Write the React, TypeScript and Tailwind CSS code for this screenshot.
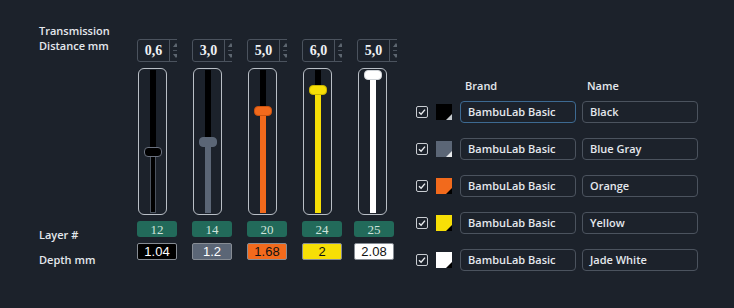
import React from "react";

type Filament = {
  spin: string;
  layer: number;
  depth: string;
  color: string;
  thumbBorder: string;
  depthText: string;
  thumbTop: number;
  name: string;
  corner: string;
};

const filaments: Filament[] = [
  { spin: "0,6", layer: 12, depth: "1.04", color: "#000000", thumbBorder: "#6b7280", depthText: "#ffffff", thumbTop: 79, name: "Black", corner: "#c4c8cc" },
  { spin: "3,0", layer: 14, depth: "1.2", color: "#5b6676", thumbBorder: "#5b6676", depthText: "#ffffff", thumbTop: 69, name: "Blue Gray", corner: "#e8eaec" },
  { spin: "5,0", layer: 20, depth: "1.68", color: "#f26a1c", thumbBorder: "#c9520f", depthText: "#111111", thumbTop: 38, name: "Orange", corner: "#000000" },
  { spin: "6,0", layer: 24, depth: "2", color: "#f7df06", thumbBorder: "#c9b400", depthText: "#111111", thumbTop: 17, name: "Yellow", corner: "#000000" },
  { spin: "5,0", layer: 25, depth: "2.08", color: "#ffffff", thumbBorder: "#d0d4d8", depthText: "#111111", thumbTop: 2, name: "Jade White", corner: "#000000" },
];

const SpinBox: React.FC<{ value: string }> = ({ value }) => (
  <div className="w-[40px] h-[23px] overflow-hidden">
    <div className="w-[46px] h-full flex border border-[#4b535e] rounded-[3px]">
      <div className="w-[31px] flex items-center justify-center text-[14px] font-bold text-[#eef1f4] [font-family:'Liberation_Serif',serif]">
        {value}
      </div>
      <div className="flex-1 border-l border-[#4b535e] flex flex-col items-center justify-center gap-[3px]">
        <svg width="6" height="4" viewBox="0 0 6 4">
          <path d="M0 4 L3 0 L6 4 Z" fill="#5d6670" />
        </svg>
        <div className="w-[6px] h-px bg-[#4b535e]" />
        <svg width="6" height="4" viewBox="0 0 6 4">
          <path d="M0 0 L3 4 L6 0 Z" fill="#5d6670" />
        </svg>
      </div>
    </div>
  </div>
);

const Slider: React.FC<{ f: Filament }> = ({ f }) => {
  const center = f.thumbTop + 5;
  return (
    <div className="ml-px w-[29px] h-[147px] border border-[#b9bfc6] rounded-[6px] relative">
      <div className="absolute left-[10.5px] top-[1px] bottom-[1px] w-[6px] bg-black" />
      <div
        className="absolute left-[10.5px] bottom-[1px] w-[6px]"
        style={{
          top: center,
          background: f.color,
          boxShadow: f.color === "#000000" ? "inset 0 0 0 1px #4b535e" : undefined,
        }}
      />
      <div
        className="absolute left-[4.5px] w-[18px] h-[10px] rounded-[4px] border"
        style={{ top: f.thumbTop - 1, background: f.color, borderColor: f.thumbBorder }}
      />
    </div>
  );
};

const Checkbox: React.FC = () => (
  <div className="w-[12px] h-[12px] rounded-[2px] border border-[#c9cdd2] flex items-center justify-center">
    <svg width="8" height="8" viewBox="0 0 8 8">
      <path d="M1 4.2 L3.1 6.3 L7 1.6" fill="none" stroke="#e8ebee" strokeWidth="1.4" />
    </svg>
  </div>
);

const Swatch: React.FC<{ color: string; corner: string }> = ({ color, corner }) => (
  <div className="w-[16px] h-[16px] relative" style={{ background: color }}>
    <svg className="absolute right-0 bottom-0" width="6" height="6" viewBox="0 0 6 6">
      <path d="M6 0 L6 6 L0 6 Z" fill={corner} />
    </svg>
  </div>
);

const App: React.FC = () => {
  return (
    <div className="w-[734px] h-[308px] bg-[#1c222b] flex text-[#e4e8ed] [font-family:'Open_Sans',sans-serif]">
      <div className="w-[137px] pl-[39px] pt-[23px] text-[11px] font-semibold leading-[15px]">
        <div>Transmission</div>
        <div>Distance mm</div>
        <div className="mt-[174px]">Layer #</div>
        <div className="mt-[10px]">Depth mm</div>
      </div>

      <div className="flex gap-[15px] pt-[39px]">
        {filaments.map((f, i) => (
          <div key={i} className="w-[40px] flex flex-col">
            <SpinBox value={f.spin} />
            <div className="mt-[6px]">
              <Slider f={f} />
            </div>
            <div
              className={
                "mt-[6px] w-[40px] h-[16px] rounded-[3px] bg-[#226a5a] flex items-center justify-center text-[13px] leading-none text-[#cfe2db] [font-family:'Liberation_Serif',serif] " +
                (i === 4 ? "-ml-[3px]" : "")
              }
            >
              {f.layer}
            </div>
            <div
              className={
                "mt-[6px] w-[40px] h-[17px] rounded-[2px] border border-[#868c94] flex items-center justify-center text-[13px] leading-none [font-family:'Liberation_Sans',sans-serif] " +
                (i === 4 ? "-ml-[3px]" : "")
              }
              style={{ background: f.color, color: f.depthText }}
            >
              {f.depth}
            </div>
          </div>
        ))}
      </div>

      <div className="ml-[19px] pt-[76px]">
        <div className="flex text-[11px] font-semibold leading-[20px]">
          <div className="w-[49px]" />
          <div className="w-[122px]">Brand</div>
          <div>Name</div>
        </div>
        <div className="mt-[5px] flex flex-col gap-[15px]">
          {filaments.map((f, i) => (
            <div key={i} className="flex items-center h-[22px]">
              <Checkbox />
              <div className="ml-[8px]">
                <Swatch color={f.color} corner={f.corner} />
              </div>
              <div
                className={
                  "ml-[8px] w-[116px] h-[22px] rounded-[4px] border flex items-center pl-[7px] text-[11px] font-semibold " +
                  (i === 0 ? "border-[#3d6a92]" : "border-[#4b535e]")
                }
              >
                BambuLab Basic
              </div>
              <div className="ml-[6px] w-[116px] h-[22px] rounded-[4px] border border-[#4b535e] flex items-center pl-[7px] text-[11px] font-semibold">
                {f.name}
              </div>
            </div>
          ))}
        </div>
      </div>
    </div>
  );
};

export default App;
